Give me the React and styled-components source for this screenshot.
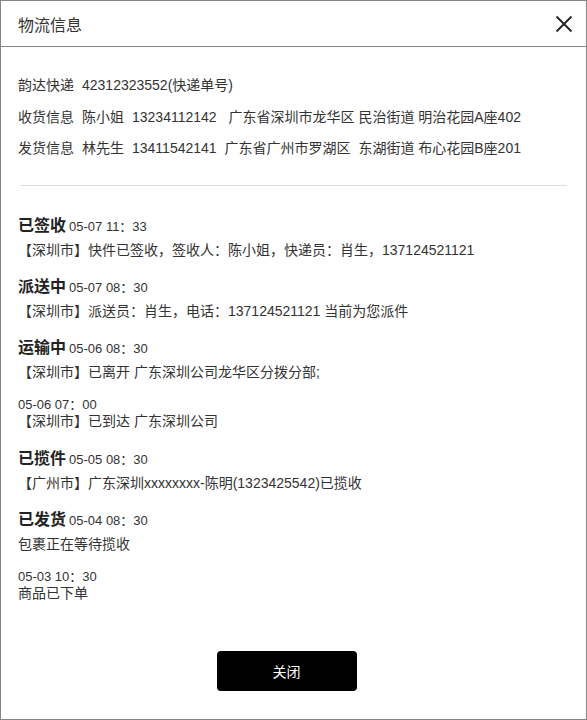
import styled, { createGlobalStyle } from "styled-components";

const GlobalStyle = createGlobalStyle`
  * { box-sizing: border-box; }
  html, body { margin: 0; padding: 0; background: #fff; }
  body {
    font-family: "Liberation Sans", "Noto Sans CJK SC", sans-serif;
    color: #333;
  }
`;

const info = [
  { label: "韵达快递", parts: ["42312323552(快递单号)"] },
  { label: "收货信息", parts: ["陈小姐", "13234112142", " 广东省深圳市龙华区 民治街道 明治花园A座402"] },
  { label: "发货信息", parts: ["林先生", "13411542141", "广东省广州市罗湖区  东湖街道 布心花园B座201"] },
];

const track = [
  {
    status: "已签收",
    time: "05-07 11：33",
    text: "【深圳市】快件已签收，签收人：陈小姐，快递员：肖生，137124521121",
  },
  {
    status: "派送中",
    time: "05-07 08：30",
    text: "【深圳市】派送员：肖生，电话：137124521121 当前为您派件",
  },
  {
    status: "运输中",
    time: "05-06 08：30",
    text: "【深圳市】已离开 广东深圳公司龙华区分拨分部;",
    sub: { time: "05-06 07：00", text: "【深圳市】已到达 广东深圳公司" },
  },
  {
    status: "已揽件",
    time: "05-05 08：30",
    text: "【广州市】广东深圳xxxxxxxx-陈明(1323425542)已揽收",
  },
  {
    status: "已发货",
    time: "05-04 08：30",
    text: "包裹正在等待揽收",
    sub: { time: "05-03 10：30", text: "商品已下单" },
  },
];

export default function App() {
  return (
    <>
      <GlobalStyle />
      <Modal>
        <Header>
          <Title>物流信息</Title>
          <CloseIcon aria-label="close">
            <svg width="18" height="18" viewBox="0 0 18 18">
              <path d="M1.5 1.5 L16.5 16.5 M16.5 1.5 L1.5 16.5" stroke="#222" strokeWidth="1.8" fill="none" />
            </svg>
          </CloseIcon>
        </Header>

        <Body>
          <InfoList>
            {info.map((row) => (
              <InfoRow key={row.label}>
                <span>{row.label}</span>
                {row.parts.map((p, i) => (
                  <span key={i}>{p}</span>
                ))}
              </InfoRow>
            ))}
          </InfoList>

          <Divider />

          <Timeline>
            {track.map((t) => (
              <Entry key={t.status}>
                <StatusLine>
                  <Status>{t.status}</Status>
                  <Time>{t.time}</Time>
                </StatusLine>
                <Detail>{t.text}</Detail>
                {t.sub && (
                  <SubEntry>
                    <Time>{t.sub.time}</Time>
                    <SubDetail>{t.sub.text}</SubDetail>
                  </SubEntry>
                )}
              </Entry>
            ))}
          </Timeline>
        </Body>

        <Footer>
          <CloseButton>关闭</CloseButton>
        </Footer>
      </Modal>
    </>
  );
}

const Modal = styled.div`
  width: 100%;
  height: 100vh;
  border: 1px solid #858585;
  display: flex;
  flex-direction: column;
  background: #fff;
`;

const Header = styled.div`
  height: 46px;
  flex-shrink: 0;
  border-bottom: 1px solid #858585;
  display: flex;
  align-items: center;
  justify-content: space-between;
  padding: 0 13px 0 17px;
`;

const Title = styled.h1`
  margin: 0;
  font-size: 16px;
  font-weight: 400;
  color: #333;
`;

const CloseIcon = styled.div`
  width: 18px;
  height: 18px;
  display: flex;
  cursor: pointer;
`;

const Body = styled.div`
  flex: 1;
  padding: 0 19px 0 17px;
`;

const InfoList = styled.div`
  padding-top: 23px;
`;

const InfoRow = styled.div`
  display: flex;
  gap: 8px;
  font-size: 14px;
  line-height: 31.5px;
  color: #333;
  white-space: pre;
`;

const Divider = styled.hr`
  margin: 20px 0 0 2px;
  border: none;
  border-top: 1px solid #ddd;
`;

const Timeline = styled.div`
  padding-top: 28px;
  display: flex;
  flex-direction: column;
  gap: 12px;
`;

const Entry = styled.div`
  display: flex;
  flex-direction: column;
`;

const StatusLine = styled.div`
  display: flex;
  align-items: baseline;
  gap: 3px;
  line-height: 24px;
`;

const Status = styled.span`
  font-size: 16px;
  font-weight: 700;
  color: #222;
`;

const Time = styled.span`
  font-size: 13px;
  color: #333;
  line-height: 16px;
`;

const Detail = styled.div`
  font-size: 14px;
  line-height: 25px;
  color: #333;
`;

const SubEntry = styled.div`
  display: flex;
  flex-direction: column;
  margin: 12px 0 6px;
`;

const SubDetail = styled.div`
  font-size: 14px;
  line-height: 16px;
  color: #333;
`;

const Footer = styled.div`
  display: flex;
  justify-content: center;
  padding-bottom: 28px;
  padding-right: 14px;
`;

const CloseButton = styled.button`
  width: 140px;
  height: 40px;
  border: none;
  border-radius: 4px;
  background: #000;
  color: #fff;
  font-family: "Liberation Sans", "Noto Sans CJK SC", sans-serif;
  font-size: 14px;
  cursor: pointer;
`;
